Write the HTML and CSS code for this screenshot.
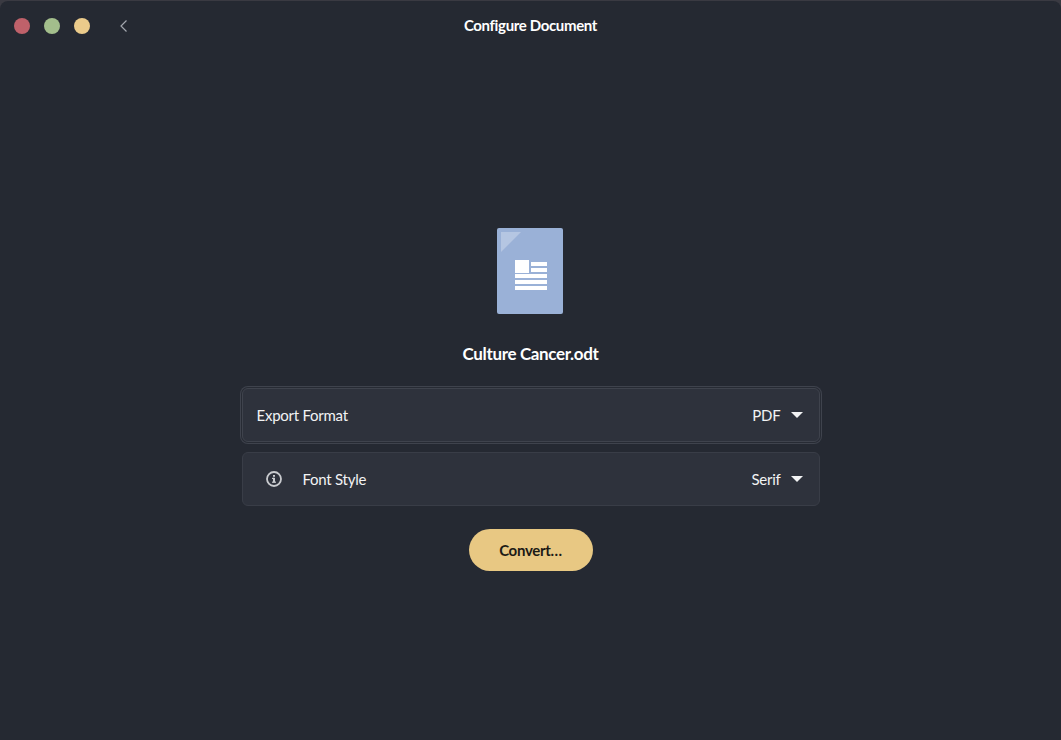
FILE: index.html
```html
<!DOCTYPE html>
<html lang="en">
<head>
    <meta charset="UTF-8">
    <title>Configure Document</title>
    <link rel="stylesheet" href="styles.css">
</head>
<body>
    <div class="window">
        <!-- Title bar -->
        <header class="titlebar">
            <div class="controls">
                <span class="dot dot-close"></span>
                <span class="dot dot-max"></span>
                <span class="dot dot-min"></span>
                <svg class="back" width="10" height="14" viewBox="0 0 10 14">
                    <path d="M8.5 1.5 3 7 8.5 12.5" fill="none" stroke="#a3a7ae" stroke-width="1.2"/>
                </svg>
            </div>
            <div class="window-title">Configure Document</div>
        </header>

        <!-- Main content -->
        <main class="content">
            <svg class="doc-icon" width="66" height="86" viewBox="0 0 66 86">
                <rect width="66" height="86" rx="2" fill="#9ab1d7"/>
                <path d="M4 4H24L4 24Z" fill="#b5c6e2"/>
                <rect x="18" y="32" width="14" height="13" fill="#fff"/>
                <rect x="34" y="34" width="16" height="4" fill="#fff"/>
                <rect x="34" y="40" width="16" height="4" fill="#fff"/>
                <rect x="18" y="46" width="32" height="4" fill="#fff"/>
                <rect x="18" y="52" width="32" height="4" fill="#fff"/>
                <rect x="18" y="58" width="32" height="4" fill="#fff"/>
            </svg>
            <div class="file-name">Culture Cancer.odt</div>

            <div class="options">
                <div class="row row-focus">
                    <span class="row-label">Export Format</span>
                    <span class="row-value">PDF</span>
                    <span class="caret"></span>
                </div>
                <div class="row">
                    <svg class="info" width="16" height="16" viewBox="0 0 16 16">
                        <circle cx="8" cy="8" r="7" fill="none" stroke="#c9cbcf" stroke-width="1.8"/>
                        <rect x="7" y="6.8" width="2" height="4.6" fill="#c9cbcf"/>
                        <rect x="6" y="6.8" width="2" height="1.2" fill="#c9cbcf"/>
                        <rect x="6" y="10.6" width="4" height="1.2" fill="#c9cbcf"/>
                        <rect x="7" y="4" width="2" height="1.8" fill="#c9cbcf"/>
                    </svg>
                    <span class="row-label">Font Style</span>
                    <span class="row-value">Serif</span>
                    <span class="caret"></span>
                </div>
            </div>

            <button class="convert">Convert…</button>
        </main>
    </div>
</body>
</html>
```

FILE: styles.css
```css
/* Page */
html, body {
    height: 100%;
}

body {
    margin: 0;
    background-color: #3a3a42;
    font-family: Lato, "Noto Sans", sans-serif;
    color: #f2f3f4;
    overflow: hidden;
}

.window {
    height: 739px;
    margin-top: 1px;
    background-color: #252932;
    border-radius: 8px 8px 0 0;
    display: flex;
    flex-direction: column;
}

/* Title bar */
.titlebar {
    position: relative;
    height: 48px;
    display: flex;
    align-items: center;
    justify-content: center;
}

.controls {
    position: absolute;
    left: 14px;
    top: 17px;
    display: flex;
    align-items: center;
    gap: 14px;
}

.dot {
    width: 16px;
    height: 16px;
    border-radius: 50%;
}

.dot-close { background-color: #bf616a; }
.dot-max { background-color: #a3be8c; }
.dot-min { background-color: #ebcb8b; }

.back {
    margin-left: 14px;
}

.window-title {
    font-size: 15px;
    font-weight: 700;
    letter-spacing: -0.35px;
    color: #fff;
}

/* Content */
.content {
    display: flex;
    flex-direction: column;
    align-items: center;
    padding-top: 179px;
}

.doc-icon {
    margin-right: 2px;
}

.file-name {
    margin-top: 28px;
    font-size: 17px;
    font-weight: 700;
    letter-spacing: -0.35px;
    line-height: 24px;
    color: #fff;
}

.options {
    margin-top: 22px;
    width: 578px;
    display: flex;
    flex-direction: column;
    gap: 10px;
}

.row {
    height: 52px;
    padding: 0 16px 0 14px;
    display: flex;
    align-items: center;
    background-color: #2e323c;
    border: 1px solid #393d47;
    border-radius: 6px;
    font-size: 15px;
    letter-spacing: -0.25px;
}

.row-focus {
    box-shadow: 0 0 0 1px #272b34, 0 0 0 2px #3f434d;
    border-color: #3f434d;
}

.info {
    margin-left: 9px;
    margin-right: 21px;
}

.row-label {
    flex: 1;
}

.caret {
    margin-left: 10px;
    width: 0;
    height: 0;
    border-left: 6px solid transparent;
    border-right: 6px solid transparent;
    border-top: 6px solid #f2f3f4;
}

.convert {
    margin-top: 23px;
    width: 124px;
    height: 42px;
    padding: 0;
    border: none;
    border-radius: 21px;
    background-color: #e8c883;
    color: #1c1b16;
    font-family: inherit;
    font-size: 15px;
    font-weight: 700;
    letter-spacing: -0.3px;
}
```
